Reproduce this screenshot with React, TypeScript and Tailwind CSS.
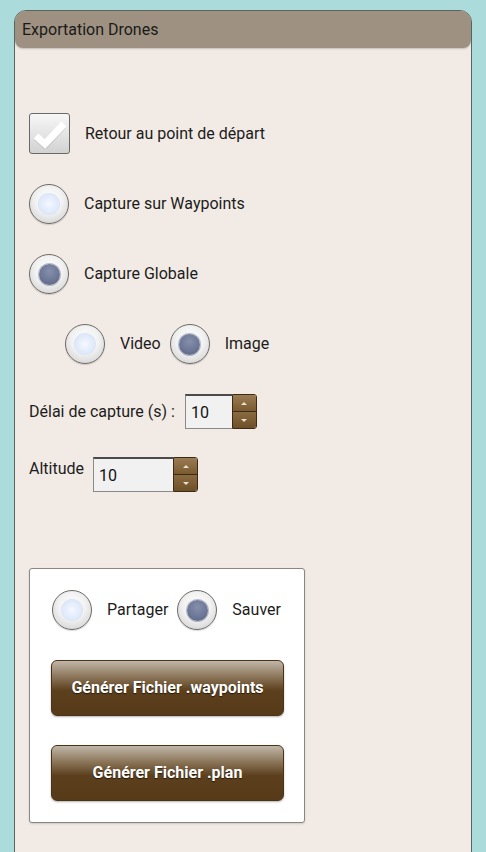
import React from 'react';

function Radio({ checked }: { checked?: boolean }) {
  return (
    <div className="w-[40px] h-[40px] shrink-0 rounded-full border-[1.5px] border-[#6e6a66] bg-[radial-gradient(circle_at_50%_40%,#ffffff_0%,#f2f2f2_45%,#c9c9c9_100%)] flex items-center justify-center shadow-[0_1px_1px_rgba(0,0,0,0.15)]">
      {checked ? (
        <div className="w-[21px] h-[21px] rounded-full bg-[radial-gradient(circle_at_50%_35%,#8590ad_0%,#6b7594_60%,#555e7c_100%)] shadow-[0_0_0_1px_rgba(90,100,130,0.4)]" />
      ) : (
        <div className="w-[22px] h-[22px] rounded-full bg-[radial-gradient(circle_at_50%_50%,#f4f8ff_0%,#dfe9fa_60%,#c9d6ea_100%)]" />
      )}
    </div>
  );
}

function Checkbox() {
  return (
    <div className="w-[41px] h-[41px] shrink-0 rounded-[3px] border-[1.5px] border-[#6a6866] bg-[linear-gradient(to_bottom,#f7f7f7,#d2d2d2)] flex items-center justify-center">
      <svg width="34" height="30" viewBox="0 0 34 30">
        <path d="M3 17 L12 25 L31 5" fill="none" stroke="rgba(0,0,0,0.08)" strokeWidth="7" strokeLinejoin="round" transform="translate(0,1.5)" />
        <path d="M3 17 L12 25 L31 5" fill="none" stroke="#ffffff" strokeWidth="7" strokeLinejoin="miter" />
      </svg>
    </div>
  );
}

function Spinner({ inputWidth }: { inputWidth: string }) {
  return (
    <div className="flex h-[35px]">
      <div className={`${inputWidth} h-full bg-[#f1f1f1] border border-[#8a8a8a] border-t-[2px] border-t-[#4a4a4a] border-r-0 flex items-center pl-[5px] text-[16px] text-[#111] pt-[2px]`}>
        10
      </div>
      <div className="w-[25px] h-full flex flex-col rounded-r-[3px] overflow-hidden border border-[#3c2a14]">
        <div className="flex-1 bg-[linear-gradient(to_bottom,#9a7c54,#7a5a30)] flex items-center justify-center border-b border-[#3c2a14]">
          <div className="w-0 h-0 border-l-[3px] border-r-[3px] border-b-[3px] border-l-transparent border-r-transparent border-b-[#e8e0d0]" />
        </div>
        <div className="flex-1 bg-[linear-gradient(to_bottom,#8a6a40,#6e5028)] flex items-center justify-center">
          <div className="w-0 h-0 border-l-[3px] border-r-[3px] border-t-[3px] border-l-transparent border-r-transparent border-t-[#e8e0d0]" />
        </div>
      </div>
    </div>
  );
}

function BrownButton({ label }: { label: string }) {
  return (
    <div className="w-[233px] h-[56px] rounded-[6px] border border-[#4a3418] bg-[linear-gradient(to_bottom,#c0b6a8_0%,#8a7458_30%,#5c3f1c_55%,#573a18_100%)] flex items-center justify-center shadow-[0_1px_2px_rgba(0,0,0,0.3)]">
      <span className="text-white font-bold text-[16px] [text-shadow:0_1px_1px_rgba(0,0,0,0.6)]">{label}</span>
    </div>
  );
}

export default function App() {
  return (
    <div className="w-[486px] h-[852px] bg-[#abdbdb] pt-[10px] pl-[14px] overflow-hidden font-['Roboto',sans-serif] text-[#1c1c1c]">
      <div className="w-[458px] h-[860px] rounded-t-[12px] border border-[#55675f] bg-[#f2ebe5] overflow-hidden">
        <div className="h-[37px] bg-[#9f9181] flex items-center pl-[7px] rounded-b-[8px] shadow-[0_1px_2px_rgba(0,0,0,0.2)]">
          <span className="text-[16px] text-[#1a1a1a]">Exportation Drones</span>
        </div>

        <div className="pl-[14px] pt-[65px]">
          <div className="flex items-center gap-[15px]">
            <Checkbox />
            <span className="text-[16px]">Retour au point de départ</span>
          </div>

          <div className="flex items-center gap-[15px] mt-[30px]">
            <Radio />
            <span className="text-[16px]">Capture sur Waypoints</span>
          </div>

          <div className="flex items-center gap-[15px] mt-[30px]">
            <Radio checked />
            <span className="text-[16px]">Capture Globale</span>
          </div>

          <div className="flex items-center mt-[30px] pl-[36px]">
            <Radio />
            <span className="text-[16px] ml-[15px]">Video</span>
            <div className="ml-[9px]">
              <Radio checked />
            </div>
            <span className="text-[16px] ml-[15px]">Image</span>
          </div>

          <div className="flex items-center mt-[30px]">
            <span className="text-[16px] mr-[10px]">Délai de capture (s) :</span>
            <Spinner inputWidth="w-[47px]" />
          </div>

          <div className="flex items-start mt-[28px]">
            <span className="text-[16px] mr-[9px]">Altitude</span>
            <Spinner inputWidth="w-[80px]" />
          </div>

          <div className="mt-[76px] w-[276px] bg-white border border-[#8a8682] rounded-[3px] px-[21px] pt-[21px] pb-[21px] shadow-[0_1px_2px_rgba(0,0,0,0.15)]">
            <div className="flex items-center pl-[1px]">
              <Radio />
              <span className="text-[16px] ml-[15px]">Partager</span>
              <div className="ml-[9px]">
                <Radio checked />
              </div>
              <span className="text-[16px] ml-[15px]">Sauver</span>
            </div>
            <div className="mt-[30px]">
              <BrownButton label="Générer Fichier .waypoints" />
            </div>
            <div className="mt-[29px]">
              <BrownButton label="Générer Fichier .plan" />
            </div>
          </div>
        </div>
      </div>
    </div>
  );
}
